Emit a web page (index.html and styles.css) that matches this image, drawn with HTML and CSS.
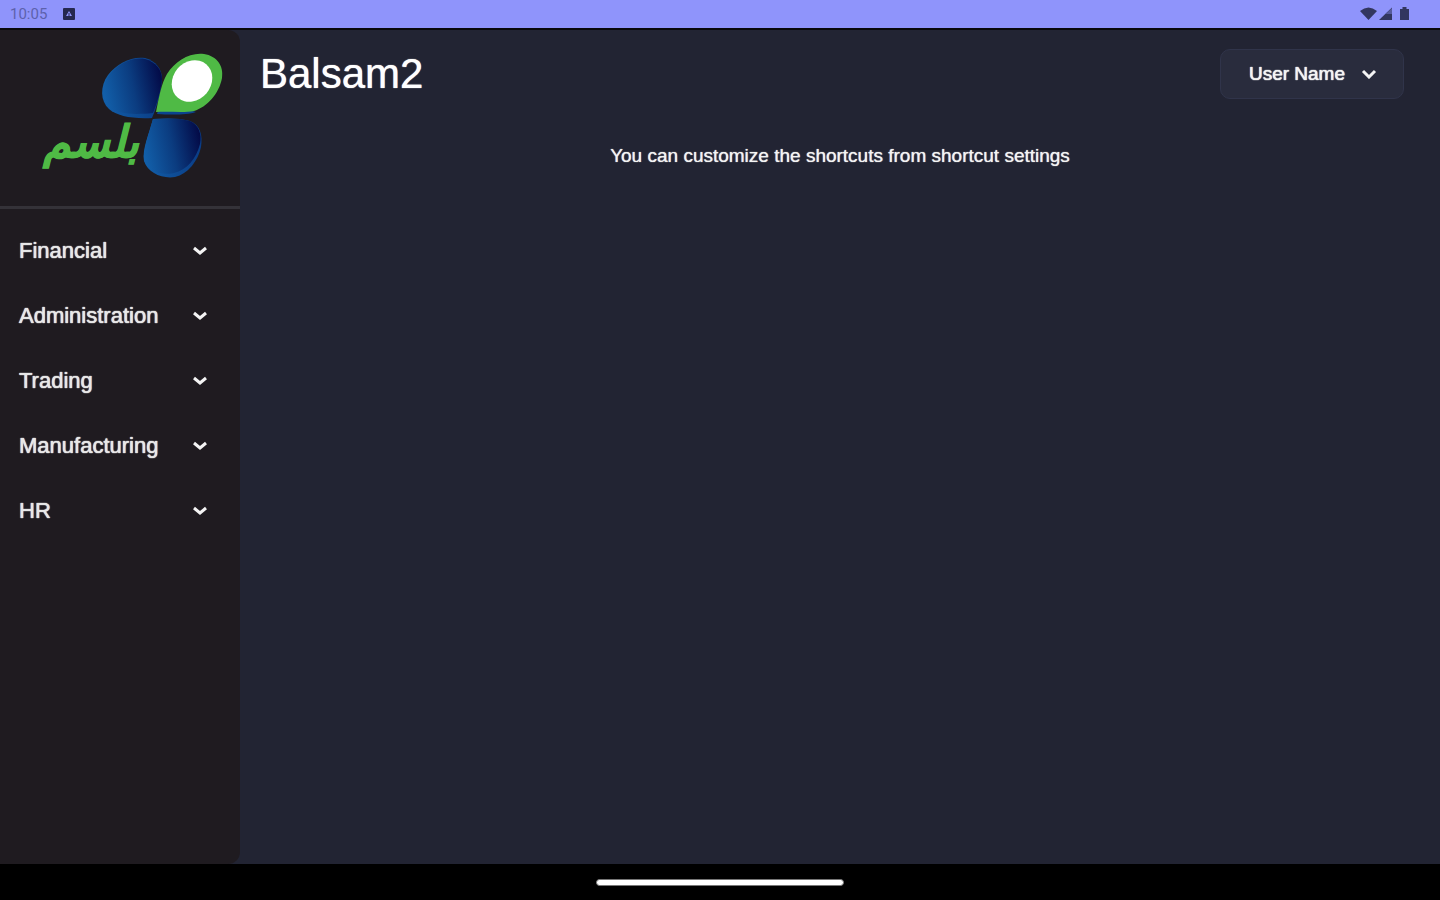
FILE: index.html
```html
<!DOCTYPE html>
<html lang="en">
<head>
<meta charset="utf-8">
<title>Balsam2</title>
<link rel="stylesheet" href="styles.css">
</head>
<body>
<div class="statusbar">
  <span class="time">10:05</span>
  <svg class="app-badge" width="12" height="12" viewBox="0 0 12 12" aria-hidden="true"><rect width="12" height="12" rx="1" fill="#25284f"/><path d="M3 8 6 3 9 8Z" fill="#8f94fb"/><path d="M6 5v3" stroke="#25284f"/></svg>
  <svg class="signals" width="52" height="16" viewBox="0 0 52 16" fill="#32365f" aria-hidden="true">
    <path d="M0 5Q8.500-2 17 5L8.500 14Z"/>
    <path d="M19 14 32 1.500V14Z"/>
    <path d="M25.500 8 32 2V8Z" fill="#565b9d"/>
    <path d="M40 3h2.500V1h4v2H49v11h-9Z"/>
  </svg>
</div>
<div class="app">
  <aside class="sidebar">
    <div class="brand">
      <svg class="logo" width="190" height="136" viewBox="38 48 190 136" role="img" aria-label="بلسم">
        <defs>
          <linearGradient id="leaf" x1="0" y1=".6" x2="1" y2=".4"><stop offset="0" stop-color="#125fa9"/><stop offset=".5" stop-color="#0b3c80"/><stop offset="1" stop-color="#030b48"/></linearGradient>
          <linearGradient id="edge" x1="0" y1="0" x2="1" y2="0"><stop offset="0" stop-color="#125fa9"/><stop offset="1" stop-color="#0a3c85"/></linearGradient>
        </defs>
        <path d="M152 118C132 119 117 116 109 109C100 101 100 86 108 75C117 63 132 56 145 58C156 61 162 69 162 79C161 92 157 106 152 118Z" fill="url(#edge)"/>
        <path d="M153 113C133 115 117 114 109 107C101 99 102 84 110 74C119 63 133 57 145 59C156 62 162 70 162 79C161 91 157 103 153 113Z" fill="url(#leaf)"/>
        <path d="M153 119C167 118 181 118 190 121C200 125 203 135 201 147C198 161 188 174 175 177C162 179 148 173 144 161C142 149 149 134 153 119Z" fill="url(#edge)"/>
        <path d="M153 119C167 118 181 118 190 121C199 125 202 134 200 144C196 159 187 170 174 173C161 176 148 171 144 160C143 149 149 134 153 119Z" fill="url(#leaf)"/>
        <path d="M157 114C172 115 187 115 196 112C188 109 174 110 158 111Z" fill="#0b438e"/>
        <path d="M156 112C159 98 161 84 167 74C175 61 190 52 204 54C217 56 224 66 222 78C219 94 207 107 194 111C183 113 169 111 156 112Z" fill="#4fba45"/>
        <ellipse cx="192" cy="81" rx="19" ry="22" transform="rotate(40 192 81)" fill="#fff"/>
        <text class="wordmark" x="91" y="157" text-anchor="middle">بلسم</text>
      </svg>
    </div>
    <nav class="menu">
      <button class="menu-item" type="button">Financial<svg class="chevron" viewBox="0 0 16 10"><path d="M2 2 8 7 14 2"/></svg></button>
      <button class="menu-item" type="button">Administration<svg class="chevron" viewBox="0 0 16 10"><path d="M2 2 8 7 14 2"/></svg></button>
      <button class="menu-item" type="button">Trading<svg class="chevron" viewBox="0 0 16 10"><path d="M2 2 8 7 14 2"/></svg></button>
      <button class="menu-item" type="button">Manufacturing<svg class="chevron" viewBox="0 0 16 10"><path d="M2 2 8 7 14 2"/></svg></button>
      <button class="menu-item" type="button">HR<svg class="chevron" viewBox="0 0 16 10"><path d="M2 2 8 7 14 2"/></svg></button>
    </nav>
  </aside>
  <main class="content">
    <header class="topbar">
      <h1 class="title">Balsam2</h1>
      <button class="user" type="button">User Name<svg class="chevron" viewBox="0 0 16 10"><path d="M2 2 8 8 14 2"/></svg></button>
    </header>
    <p class="hint">You can customize the shortcuts from shortcut settings</p>
  </main>
</div>
<div class="gesture"><span class="handle"></span></div>
</body>
</html>
```
FILE: styles.css
```css
* {
  box-sizing: border-box;
}

body {
  margin: 0;
  min-height: 100vh;
  display: flex;
  flex-direction: column;
  background: #222433;
  color: #f4f4f4;
  font-family: "Liberation Sans", Arial, sans-serif;
}

.statusbar {
  display: flex;
  align-items: center;
  height: 30px;
  padding: 0 28px 0 10px;
  background: #8f94fb;
  border-bottom: 2px solid #08080c;
}

.time {
  color: #5d61ac;
  font-family: Roboto, sans-serif;
  font-size: 15px;
}

.app-badge {
  margin-left: 16px;
}

.signals {
  margin-left: auto;
}

.app {
  flex: 1;
  display: flex;
}

.sidebar {
  width: 240px;
  flex: none;
  background: #1f1b20;
  border-radius: 0 12px 12px 0;
}

.brand {
  display: flex;
  justify-content: flex-end;
  padding: 18px 12px 22px 0;
  border-bottom: 3px solid #343238;
}

.logo {
  display: block;
}

.wordmark {
  fill: #4fba45;
  stroke: #4fba45;
  stroke-width: 1px;
  font-family: "DejaVu Sans", sans-serif;
  font-size: 44px;
  font-weight: bold;
  font-style: italic;
}

.menu {
  display: flex;
  flex-direction: column;
  padding-top: 9px;
}

.menu-item {
  display: flex;
  align-items: center;
  justify-content: space-between;
  height: 65px;
  padding: 0 32px 0 19px;
  border: 0;
  background: none;
  color: #e8e8e8;
  font: 22px "Liberation Sans", Arial, sans-serif;
  text-shadow: 0 0 1px #e8e8e8, 0 0 1px #e8e8e8;
}

.chevron {
  width: 16px;
  height: 10px;
  fill: none;
  stroke: #f4f4f4;
  stroke-width: 3;
}

.content {
  flex: 1;
}

.topbar {
  display: flex;
  align-items: center;
  justify-content: space-between;
  padding: 19px 36px 0 20px;
}

.title {
  margin: 0;
  color: #fff;
  font-size: 42px;
  font-weight: normal;
  line-height: 50px;
  text-shadow: 0 0 1px #fff;
}

.user {
  display: flex;
  align-items: center;
  gap: 16px;
  height: 50px;
  padding: 0 26px 0 28px;
  border: 1px solid #30344a;
  border-radius: 10px;
  background: #292c3d;
  color: #f4f4f4;
  font: 19px "Liberation Sans", Arial, sans-serif;
  text-shadow: 0 0 1px #f4f4f4, 0 0 1px #f4f4f4;
}

.hint {
  margin: 45px 0 0;
  font-size: 19px;
  line-height: 24px;
  text-align: center;
  text-shadow: 0 0 1px #f4f4f4;
}

.gesture {
  display: flex;
  align-items: center;
  justify-content: center;
  height: 36px;
  background: #000;
}

.handle {
  width: 248px;
  height: 7px;
  border-radius: 4px;
  background: #fff;
  border: 1px solid #777;
}
```
